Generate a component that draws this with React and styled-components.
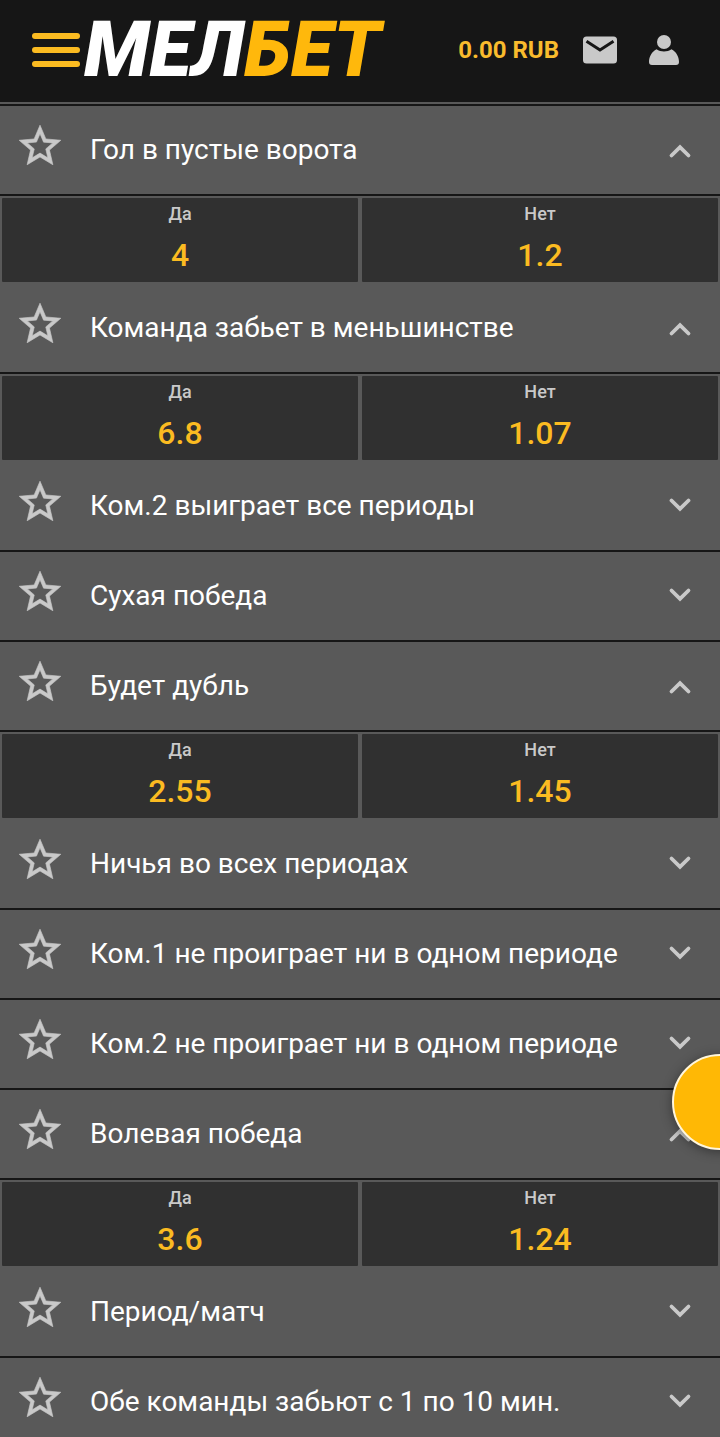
import React, { useState } from "react";
import styled, { createGlobalStyle, css } from "styled-components";

const GlobalStyle = createGlobalStyle`
  * {
    box-sizing: border-box;
  }

  body {
    margin: 0;
    background: #595959;
    font-family: Roboto, "Noto Sans", sans-serif;
  }
`;

const Page = styled.div`
  height: 100vh;
  overflow: hidden;
  background: #595959;
`;

const Header = styled.header`
  display: flex;
  align-items: center;
  height: 102px;
  padding: 0 40px 2px 32px;
  background: #161616;
`;

const buttonReset = css`
  border: 0;
  padding: 0;
  background: none;
  font: inherit;
  color: inherit;
  cursor: pointer;
`;

const MenuButton = styled.button`
  ${buttonReset};
  display: flex;
  flex-direction: column;
  gap: 8px;
  width: 48px;
`;

const MenuBar = styled.span`
  height: 6px;
  border-radius: 3px;
  background: #fbbb21;
`;

const Logo = styled.a`
  margin: 0 auto 0 4px;
  font-size: 77px;
  font-style: italic;
  font-weight: 900;
  line-height: 76px;
  color: #ffffff;
  text-decoration: none;
`;

const LogoAccent = styled.span`
  color: #ffb80c;
`;

const Balance = styled.a`
  margin-right: 24px;
  font-size: 24px;
  font-weight: 700;
  line-height: 28px;
  white-space: nowrap;
  color: #f9bb2d;
  text-decoration: none;
`;

const HeaderButton = styled.button`
  ${buttonReset};
  display: flex;
  color: #c9c9c9;

  & + & {
    margin-left: 31px;
  }
`;

const Markets = styled.main`
  margin-top: 2px;
  border-top: 2px solid #161616;
`;

const MarketHeader = styled.div`
  display: flex;
  align-items: center;
  height: 90px;
  padding: 0 28px 0 15px;
  border-bottom: 2px solid #161616;
  color: #c9c9c9;
`;

const StarButton = styled.button`
  ${buttonReset};
  display: flex;
  margin-right: 25px;
  padding-bottom: 8px;
`;

const ToggleButton = styled.button`
  ${buttonReset};
  display: flex;
  flex: 1;
  align-items: center;
  justify-content: space-between;
  height: 100%;
  text-align: left;
`;

const MarketTitle = styled.span`
  font-size: 28px;
  line-height: 32px;
  color: #ffffff;
`;

const Outcomes = styled.div`
  display: grid;
  grid-template-columns: 1fr 1fr;
  gap: 4px;
  padding: 2px;
`;

const Outcome = styled.button`
  ${buttonReset};
  display: flex;
  flex-direction: column;
  align-items: center;
  gap: 12px;
  height: 84px;
  padding-top: 6px;
  border-radius: 1px;
  background: #303030;
  font-weight: 500;
`;

const OutcomeName = styled.span`
  font-size: 18px;
  line-height: 20px;
  color: #c9c9c9;
`;

const OutcomeOdds = styled.span`
  font-size: 32px;
  line-height: 38px;
  color: #fbbb21;
`;

const FloatingButton = styled.button`
  ${buttonReset};
  position: fixed;
  right: -48px;
  bottom: 287px;
  width: 96px;
  height: 96px;
  border: 2px solid #fff6dc;
  border-radius: 50%;
  background: #ffb805;
  box-shadow: 0 2px 12px rgba(0, 0, 0, 0.4);
`;

const MARKETS = [
  { title: "Гол в пустые ворота", yes: "4", no: "1.2", open: true },
  { title: "Команда забьет в меньшинстве", yes: "6.8", no: "1.07", open: true },
  { title: "Ком.2 выиграет все периоды" },
  { title: "Сухая победа" },
  { title: "Будет дубль", yes: "2.55", no: "1.45", open: true },
  { title: "Ничья во всех периодах" },
  { title: "Ком.1 не проиграет ни в одном периоде" },
  { title: "Ком.2 не проиграет ни в одном периоде" },
  { title: "Волевая победа", yes: "3.6", no: "1.24", open: true },
  { title: "Период/матч" },
  { title: "Обе команды забьют с 1 по 10 мин." },
];

function StarIcon() {
  return (
    <svg
      width="50"
      height="50"
      viewBox="0 0 24 24"
      fill="currentColor"
      stroke="currentColor"
      strokeWidth="0.3"
    >
      <path d="M22 9.24l-7.19-.62L12 2 9.19 8.63 2 9.24l5.46 4.73L5.82 21 12 17.27 18.18 21l-1.63-7.03L22 9.24zM12 15.4l-3.76 2.27 1-4.28-3.32-2.88 4.38-.38L12 6.1l1.71 4.04 4.38.38-3.32 2.88 1 4.28L12 15.4z" />
    </svg>
  );
}

function ChevronIcon({ up }) {
  return (
    <svg
      width="24"
      height="24"
      viewBox="0 0 24 24"
      fill="none"
      stroke="currentColor"
      strokeWidth="3.8"
      strokeLinecap="round"
    >
      <path d={up ? "M3.5 17.5L12 9.2l8.5 8.3" : "M3.5 6.5L12 14.8l8.5-8.3"} />
    </svg>
  );
}

function MailIcon() {
  return (
    <svg width="34" height="28" viewBox="0 0 34 28">
      <rect width="34" height="27" y="0.5" rx="3.5" fill="currentColor" />
      <path d="M3.5 5.2L17 14l13.500-8.800" fill="none" stroke="#161616" strokeWidth="3" />
    </svg>
  );
}

function UserIcon() {
  return (
    <svg width="32" height="30" viewBox="0 0 32 30" fill="currentColor">
      <circle cx="16" cy="7" r="7" />
      <path d="M8.5 14.3c4.2 3 10.8 3 15 0 4.5 2.2 7.5 7.5 7.5 12.7 0 2-1 3-3 3H4c-2 0-3-1-3-3 0-5.2 3-10.5 7.5-12.7z" />
    </svg>
  );
}

function Market({ market }) {
  const [open, setOpen] = useState(Boolean(market.open));

  return (
    <section>
      <MarketHeader>
        <StarButton aria-label="В избранное">
          <StarIcon />
        </StarButton>
        <ToggleButton aria-expanded={open} onClick={() => setOpen(!open)}>
          <MarketTitle>{market.title}</MarketTitle>
          <ChevronIcon up={open} />
        </ToggleButton>
      </MarketHeader>
      {open && market.yes && (
        <Outcomes>
          <Outcome>
            <OutcomeName>Да</OutcomeName>
            <OutcomeOdds>{market.yes}</OutcomeOdds>
          </Outcome>
          <Outcome>
            <OutcomeName>Нет</OutcomeName>
            <OutcomeOdds>{market.no}</OutcomeOdds>
          </Outcome>
        </Outcomes>
      )}
    </section>
  );
}

function App() {
  return (
    <Page>
      <GlobalStyle />
      <Header>
        <MenuButton aria-label="Меню">
          <MenuBar />
          <MenuBar />
          <MenuBar />
        </MenuButton>
        <Logo href="#">
          МЕЛ<LogoAccent>БЕТ</LogoAccent>
        </Logo>
        <Balance href="#">0.00 RUB</Balance>
        <HeaderButton aria-label="Сообщения">
          <MailIcon />
        </HeaderButton>
        <HeaderButton aria-label="Профиль">
          <UserIcon />
        </HeaderButton>
      </Header>
      <Markets>
        {MARKETS.map((market) => (
          <Market key={market.title} market={market} />
        ))}
      </Markets>
      <FloatingButton aria-label="Купон" />
    </Page>
  );
}

export default App;
